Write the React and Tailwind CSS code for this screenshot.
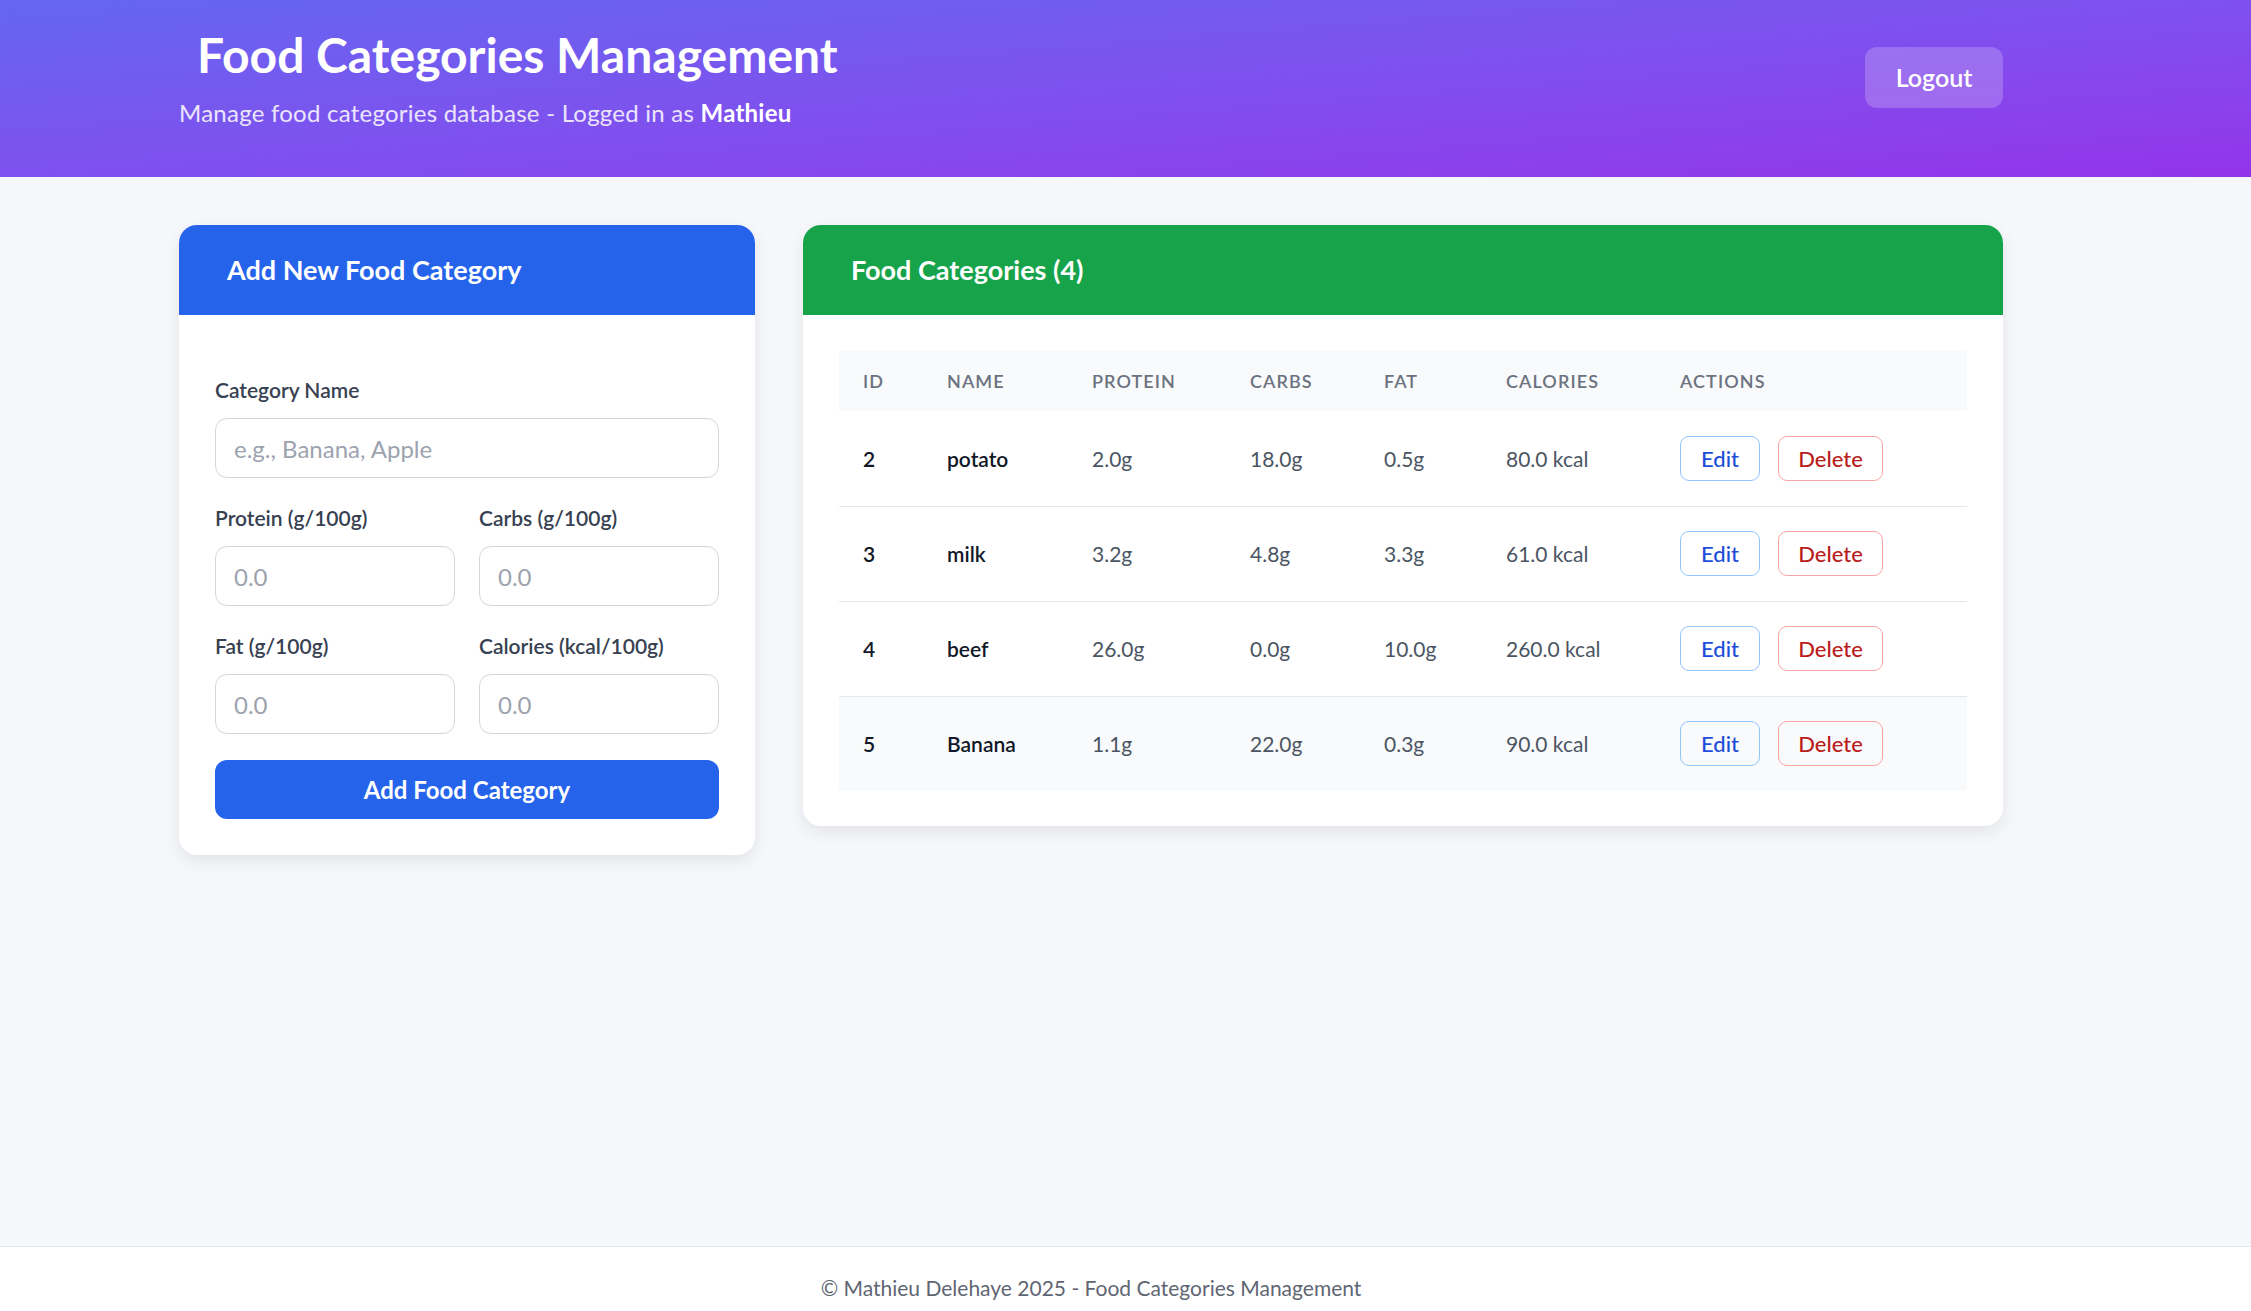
import React from "react";

const rows = [
  { id: 2, name: "potato", protein: "2.0g", carbs: "18.0g", fat: "0.5g", cal: "80.0 kcal" },
  { id: 3, name: "milk", protein: "3.2g", carbs: "4.8g", fat: "3.3g", cal: "61.0 kcal" },
  { id: 4, name: "beef", protein: "26.0g", carbs: "0.0g", fat: "10.0g", cal: "260.0 kcal" },
  { id: 5, name: "Banana", protein: "1.1g", carbs: "22.0g", fat: "0.3g", cal: "90.0 kcal" },
];

function Field({ label, placeholder }) {
  return (
    <div>
      <label className="block text-[21px] leading-[31px] font-semibold text-[#374151] mb-[13px]">{label}</label>
      <input
        placeholder={placeholder}
        className="block w-full h-[60px] px-[18px] rounded-[12px] border-[1.5px] border-[#d1d5db] bg-white text-[24px] text-[#111827] placeholder:text-[#9ca3af] outline-none"
      />
    </div>
  );
}

export default function App() {
  return (
    <div className="min-h-screen flex flex-col bg-[#f5f7fa] font-[Lato,'Noto_Sans',sans-serif]">
      <header className="h-[177px] bg-linear-to-br from-[#6366f1] to-[#9333ea] text-white">
        <div className="ml-[179px] w-[1824px] flex justify-between items-start pt-[26px]">
          <div>
            <h1 className="pl-[18px] text-[48px] leading-[58px] font-bold">Food Categories Management</h1>
            <p className="mt-[11px] text-[24px] leading-[36px] tracking-[0.01em] text-white/85">
              Manage food categories database - Logged in as <strong className="font-bold text-white">Mathieu</strong>
            </p>
          </div>
          <button className="mt-[21px] h-[61px] w-[138px] rounded-[12px] bg-white/20 text-[25px] font-semibold text-white">
            Logout
          </button>
        </div>
      </header>

      <main className="flex-1 pt-[48px]">
        <div className="ml-[179px] w-[1824px] grid grid-cols-[576px_1fr] gap-[48px] items-start">
          <section className="bg-white rounded-[18px] overflow-hidden shadow-[0_6px_16px_rgba(0,0,0,0.08)]">
            <div className="h-[90px] bg-[#2563eb] flex items-center px-[48px]">
              <h2 className="text-[27px] font-bold text-white">Add New Food Category</h2>
            </div>
            <div className="px-[36px] pt-[59px] pb-[36px]">
              <Field label="Category Name" placeholder="e.g., Banana, Apple" />
              <div className="grid grid-cols-2 gap-x-[24px] mt-[24px]">
                <Field label="Protein (g/100g)" placeholder="0.0" />
                <Field label="Carbs (g/100g)" placeholder="0.0" />
              </div>
              <div className="grid grid-cols-2 gap-x-[24px] mt-[24px]">
                <Field label="Fat (g/100g)" placeholder="0.0" />
                <Field label="Calories (kcal/100g)" placeholder="0.0" />
              </div>
              <button className="mt-[26px] w-full h-[59px] rounded-[12px] bg-[#2563eb] text-white text-[24px] font-bold">
                Add Food Category
              </button>
            </div>
          </section>

          <section className="bg-white rounded-[18px] overflow-hidden shadow-[0_6px_16px_rgba(0,0,0,0.08)]">
            <div className="h-[90px] bg-[#16a34a] flex items-center px-[48px]">
              <h2 className="text-[27px] font-bold text-white">Food Categories (4)</h2>
            </div>
            <div className="p-[36px] pb-[35px]">
              <table className="w-full table-fixed border-collapse">
                <thead>
                  <tr className="bg-[#f9fafb]">
                    {[
                      ["ID", "w-[84px]"],
                      ["Name", "w-[145px]"],
                      ["Protein", "w-[158px]"],
                      ["Carbs", "w-[134px]"],
                      ["Fat", "w-[122px]"],
                      ["Calories", "w-[174px]"],
                      ["Actions", ""],
                    ].map(([h, w]) => (
                      <th
                        key={h}
                        className={`${w} h-[60px] px-[24px] text-left text-[18px] font-semibold uppercase tracking-[0.06em] text-[#6b7280]`}
                      >
                        {h}
                      </th>
                    ))}
                  </tr>
                </thead>
                <tbody>
                  {rows.map((r, i) => (
                    <tr
                      key={r.id}
                      className={i === rows.length - 1 ? "bg-[#f9fafb]" : "border-b border-[#e5e7eb]"}
                    >
                      <td className="h-[95px] px-[24px] text-[21px] font-semibold text-[#111827]">{r.id}</td>
                      <td className="px-[24px] text-[21px] font-semibold text-[#111827]">{r.name}</td>
                      <td className="px-[24px] text-[21px] text-[#4b5563]">{r.protein}</td>
                      <td className="px-[24px] text-[21px] text-[#4b5563]">{r.carbs}</td>
                      <td className="px-[24px] text-[21px] text-[#4b5563]">{r.fat}</td>
                      <td className="px-[24px] text-[21px] text-[#4b5563]">{r.cal}</td>
                      <td className="px-[24px]">
                        <div className="flex gap-[18px]">
                          <button className="h-[45px] w-[80px] rounded-[9px] border-[1.5px] border-[#93c5fd] text-[22px] font-medium text-[#1d4ed8]">
                            Edit
                          </button>
                          <button className="h-[45px] w-[105px] rounded-[9px] border-[1.5px] border-[#fca5a5] text-[22px] font-medium text-[#b91c1c]">
                            Delete
                          </button>
                        </div>
                      </td>
                    </tr>
                  ))}
                </tbody>
              </table>
            </div>
          </section>
        </div>
      </main>

      <footer className="h-[65px] bg-white border-t border-[#e5e7eb]">
        <p className="w-[2182px] text-center pt-[25px] text-[21px] leading-[31px] text-[#5f6673]">
          © Mathieu Delehaye 2025 - Food Categories Management
        </p>
      </footer>
    </div>
  );
}
